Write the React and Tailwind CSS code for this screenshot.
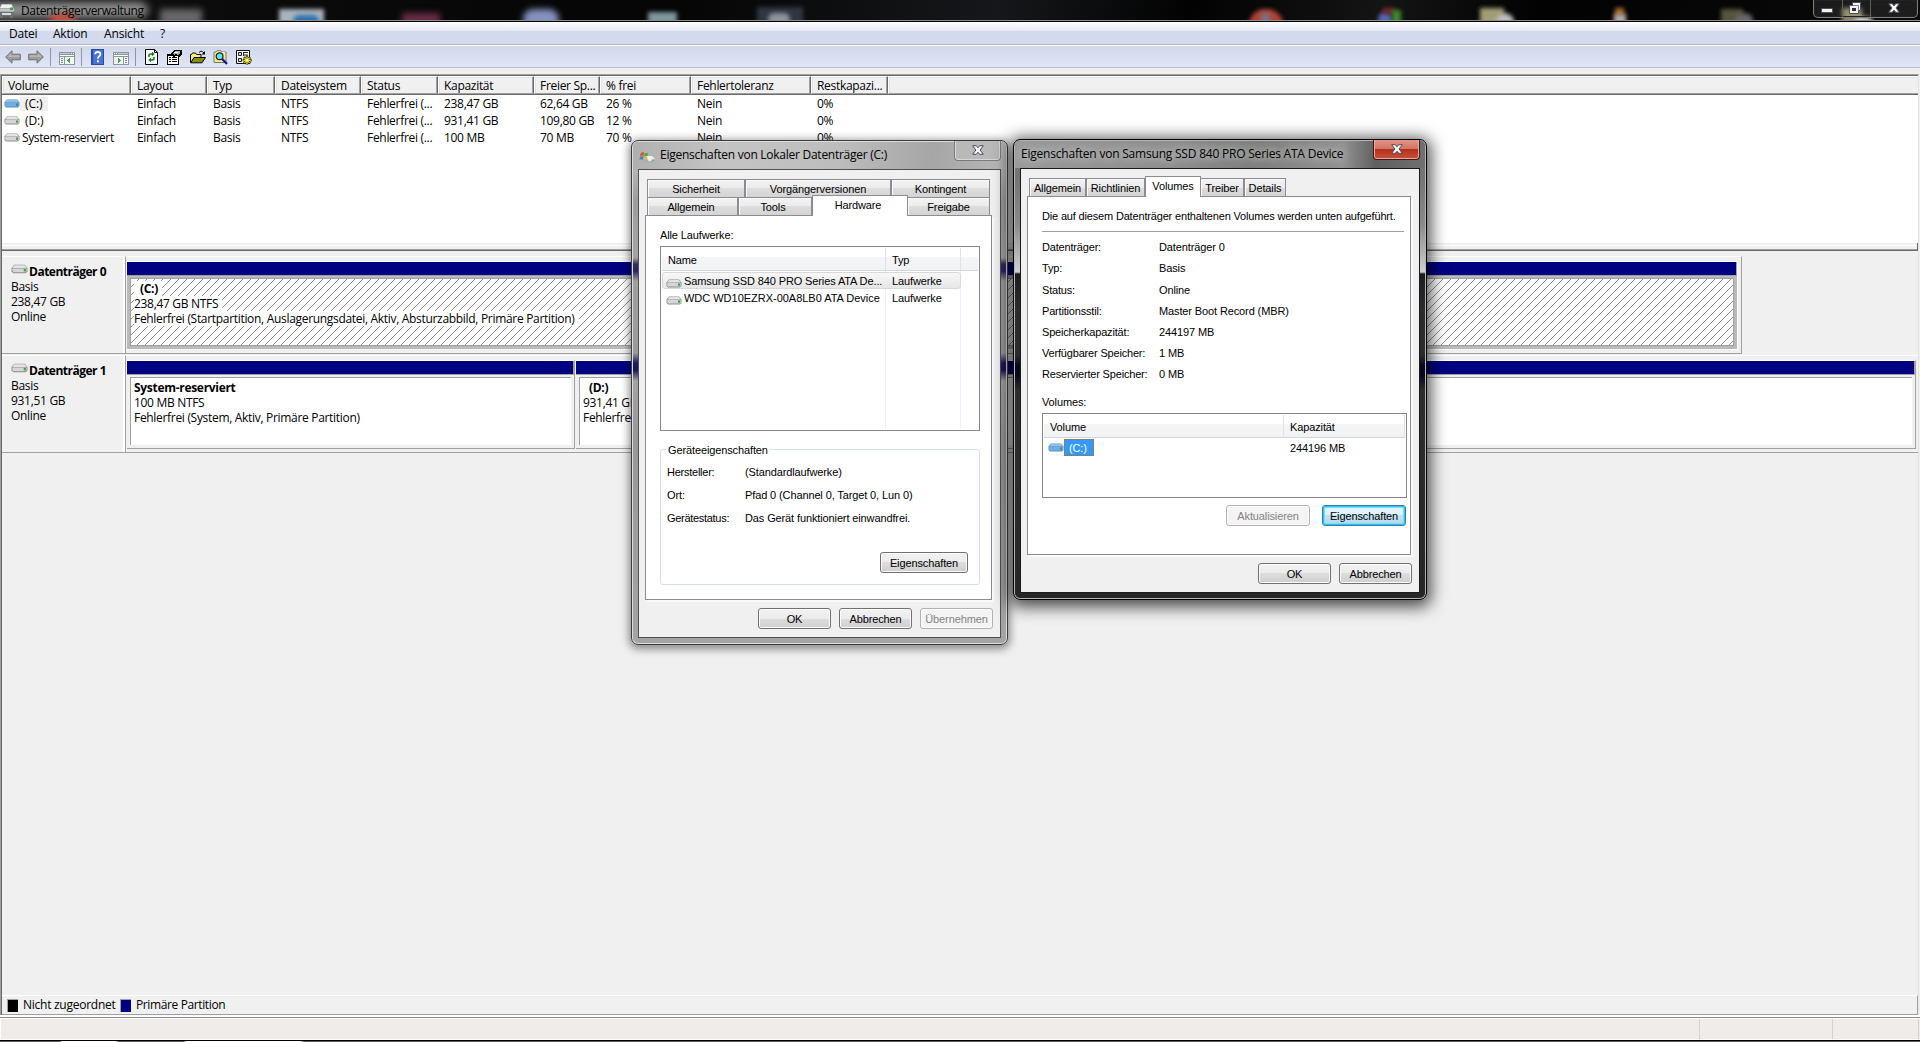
import React from "react";
import clsx from "clsx";

const columns = [
  { label: "Volume", w: "w-[129px]" },
  { label: "Layout", w: "w-[76px]" },
  { label: "Typ", w: "w-[68px]" },
  { label: "Dateisystem", w: "w-[86px]" },
  { label: "Status", w: "w-[77px]" },
  { label: "Kapazität", w: "w-[96px]" },
  { label: "Freier Sp...", w: "w-[66px]" },
  { label: "% frei", w: "w-[91px]" },
  { label: "Fehlertoleranz", w: "w-[120px]" },
  { label: "Restkapazi...", w: "w-[77px]" },
];

const volumes = [
  { name: "(C:)", system: true, cells: ["Einfach", "Basis", "NTFS", "Fehlerfrei (...", "238,47 GB", "62,64 GB", "26 %", "Nein", "0%"] },
  { name: "(D:)", cells: ["Einfach", "Basis", "NTFS", "Fehlerfrei (...", "931,41 GB", "109,80 GB", "12 %", "Nein", "0%"] },
  { name: "System-reserviert", cells: ["Einfach", "Basis", "NTFS", "Fehlerfrei (...", "100 MB", "70 MB", "70 %", "Nein", "0%"] },
];

const diskInfo = [
  ["Datenträger:", "Datenträger 0"],
  ["Typ:", "Basis"],
  ["Status:", "Online"],
  ["Partitionsstil:", "Master Boot Record (MBR)"],
  ["Speicherkapazität:", "244197 MB"],
  ["Verfügbarer Speicher:", "1 MB"],
  ["Reservierter Speicher:", "0 MB"],
];

/* ---------- Icons ---------- */

const DriveIcon = ({ blue, className }) => (
  <svg viewBox="0 0 16 9" className={clsx("shrink-0", className)}>
    <path d="M3 .5h10l2.5 3v3.2L14 8.5H2L.5 6.7V3.5z" fill={blue ? "#4f8fcb" : "#8d8d90"} />
    <path d="M3.2 1h9.6l2 2.6H1.2z" fill={blue ? "#8fc0ea" : "#e3e3e6"} />
    <path d="M1.3 4h13.4v2.4l-1 1.2H2.3l-1-1.2z" fill={blue ? "#74aee0" : "#d5d5da"} />
    <path d="M12 4.4h2v2.4h-2z" fill={blue ? "#2f9a78" : "#3fa535"} />
  </svg>
);

const AppIcon = () => (
  <svg viewBox="0 0 16 16" className="h-4 w-4 shrink-0">
    <path d="M2 1h11l2 4v4H0V5z" fill="#8f9294" />
    <path d="M3 1.5h9.5L14 5H1z" fill="#f1f1f1" />
    <path d="M0 5.5h15v3H0z" fill="#c4c6c9" />
    <path d="M11 4.500h3V7h-3z" fill="#35a33a" />
    <path d="M0 9h15l-1 3v3h-3v-2H4v2H1v-3z" fill="#6b7275" />
    <path d="M3 10h9v2H3z" fill="#d9dcdd" />
  </svg>
);

const ArrowIcon = ({ flip }) => (
  <svg viewBox="0 0 16 14" className={clsx("h-3.5 w-4", flip && "-scale-x-100")}>
    <path d="M.7 7 7 .8v3.400h8.300v5.600H7v3.400z" fill="#9c9c9c" stroke="#6f6f6f" strokeWidth="1" />
    <path d="M2 7 6.200 2.800V5.200h8.200V7z" fill="#b5b5b5" />
  </svg>
);

const PaneIcon = ({ flip }) => (
  <svg viewBox="0 0 16 13" shapeRendering="crispEdges" className={clsx("h-[13px] w-4", flip && "-scale-x-100")}>
    <path d="M0 0h16v13H0z" fill="#8f959c" />
    <path d="M1 1h10v1H1z" fill="#c5cad0" />
    <path d="M12 1h1v1h-1zM14 1h1v1h-1zM1 3h14v1H1z" fill="#fff" />
    <path d="M1 5h4v7H1zM6 5h9v7H6z" fill="#fafafa" />
    <path d="M2 6h2v1H2zM2 8h2v1H2zM2 10h2v1H2z" fill="#6c86ad" />
    <path d="M11 5.600v5.800L8 8.500z" fill="#36b036" />
  </svg>
);

const HelpIcon = () => (
  <svg viewBox="0 0 13 16" className="h-4 w-[13px]">
    <path d="M0 0h13v16H0z" fill="#2a4ca8" />
    <path d="M2 1h10v14H2z" fill="#4a74d4" />
    <path d="M4.200 5.200c0-3.200 5.200-3.200 5.200 0 0 2-2.500 2-2.500 4.600" fill="none" stroke="#fff" strokeWidth="1.7" />
    <path d="M6 11.300h1.900v1.900H6z" fill="#fff" />
  </svg>
);

const RefreshIcon = () => (
  <svg viewBox="0 0 13 16" className="h-4 w-[13px]">
    <path d="M.5.5h9l3 3v12H.5z" fill="#fff" stroke="#000" />
    <path d="M9.500.5v3h3" fill="none" stroke="#000" />
    <path d="M4 8V6.500Q4 5 6 5h1.500M9 8v1.500Q9 11 7 11H5.500" fill="none" stroke="#0a7d1c" strokeWidth="1.5" />
    <path d="M7 2.700 9.700 5 7 7.300zM6 8.700 3.300 11 6 13.300z" fill="#0a7d1c" />
  </svg>
);

const PropertiesIcon = () => (
  <svg viewBox="0 0 16 15" shapeRendering="crispEdges" className="h-[15px] w-4">
    <path d="M0 4h12v11H0z" fill="#000" />
    <path d="M1 6h10v8H1z" fill="#fff" />
    <path d="M2 7h2v1H2zM5 7h5v1H5zM2 9h2v1H2zM5 9h5v1H5zM2 11h2v1H2zM5 11h5v1H5z" fill="#000" />
    <path d="M4 3 7 0h8v4l-3 3-3-1-3 1-1-2z" fill="#000" />
    <path d="M5 3h2l1-2h5v3l-2 1-2-1-2 1z" fill="#a9a9a9" />
    <path d="M7 2h4v1H7z" fill="#fff" />
  </svg>
);

const OpenIcon = () => (
  <svg viewBox="0 0 16 14" className="h-3.5 w-4">
    <path d="M.5 12.500v-8h1l1-1.500h3l1 1.500H11v3" fill="#f4ee7a" stroke="#000" />
    <path d="M.7 12.800 4 7.500h11.500L12 12.800z" fill="#8a8a12" stroke="#000" />
    <path d="M9 2.600Q11.300-.3 14 3" fill="none" stroke="#000" />
    <path d="M15 1v3.500h-3.500z" fill="#000" />
  </svg>
);

const SearchIcon = () => (
  <svg viewBox="0 0 16 15" className="h-[15px] w-4">
    <path d="M1 12.500V2h2l1-1.300h4L9 2h4v10.500z" fill="#f5ee86" stroke="#77776a" />
    <path d="M3 2.700h9" stroke="#fff" />
    <circle cx="6.600" cy="6.200" r="3.400" fill="#63e1ee" stroke="#222" strokeWidth="1.2" />
    <path d="M9.200 9 14 14" stroke="#10139b" strokeWidth="2.2" />
  </svg>
);

const SettingsIcon = () => (
  <svg viewBox="0 0 16 15" className="h-[15px] w-4">
    <path d="M.5.5h13v13H.5z" fill="#fff" stroke="#111" />
    <path d="M2.500 2.500h3v3h-3zM2.500 8.500h3v3h-3z" fill="#ddd" stroke="#222" />
    <path d="M8 2.500h4M8 5h4M7.500 2v4" stroke="#222" />
    <path d="M11 5.500v9M6.600 10.300h9M7.800 7.100l6.400 6.400M14.200 7.100l-6.400 6.400" stroke="#2c2c08" strokeWidth="2.4" />
    <path d="M11 6.600v7.500M7.300 10.300h7.500M8.400 7.700l5.200 5.200M13.600 7.700l-5.200 5.200" stroke="#eadd22" strokeWidth="1.3" />
    <circle cx="11" cy="10.300" r="1" fill="#fff" />
  </svg>
);

const CloseGlyph = ({ className }) => (
  <svg viewBox="0 0 12 10" className={className}>
    <path d="M.7.7h3.600L6 2.800 7.700.7h3.600L8.100 5l3.200 4.300H7.700L6 7.200 4.300 9.300H.7L3.900 5z" fill="#f6f6f6" stroke="#4d4f5e" strokeWidth="1" />
  </svg>
);

const TitleDriveIcon = () => (
  <svg viewBox="0 0 17 14" className="h-3.5 w-[17px]">
    <path d="M4 6h9l3 3v2l-6 2.500L3 10z" fill="#a9adb0" />
    <path d="M6 6h7l3 3-6 2.500z" fill="#eceeef" />
    <path d="M1.500 3.500Q3 1.500 5 2.500l-.5 3.200Q2.500 5 1 6.700z" fill="#d0562a" />
    <path d="M5.600 2.800Q7.500 3.500 9 2.800L8.600 6q-1.700.8-3.500-.1z" fill="#5fa53a" />
    <path d="M.9 7.200q1.700-1.500 3.500-.5L4 9.800q-1.800-1-3.500.2z" fill="#3d86c6" />
    <path d="M5 6.800q1.800.9 3.500.2L8 10q-1.700.7-3.400-.1z" fill="#e3b740" />
    <path d="M13 9.500h1.500v1H13z" fill="#35a33a" />
  </svg>
);

/* ---------- Main window ---------- */

// desktop icons shimmering through the glass title bar
const Glass = () => (
  <div className="absolute inset-0 overflow-hidden bg-[linear-gradient(100deg,#151515,#0b0b0b_12%,#050505_35%,#15171a_52%,#020202_62%,#141414_72%,#020202_80%,#0a0a0a)]">
    <div className="absolute left-[-10px] top-[2px] h-4 w-[158px] rounded-full bg-[#8f8f8f] blur-[4px]" />
    <div className="absolute left-[50px] top-[14px] h-3 w-[26px] rounded-full bg-[#c8503f] blur-[3px]" />
    <div className="absolute left-[160px] top-[9px] h-4 w-[42px] bg-[#66666a] blur-[3px]" />
    <div className="absolute left-[279px] top-[9px] h-4 w-[45px] bg-[#a9b4bd] blur-[2px]" />
    <div className="absolute left-[293px] top-[15px] h-3 w-[26px] rounded-full bg-[#2f70b0] blur-[2px]" />
    <div className="absolute left-[402px] top-[13px] h-3 w-[38px] bg-[#6b2c45] blur-[3px]" />
    <div className="absolute left-[523px] top-[9px] h-5 w-[36px] rounded-full bg-[#8492c0] blur-[3px]" />
    <div className="absolute left-[648px] top-[12px] h-3 w-[29px] bg-[#7d979b] blur-[2px]" />
    <div className="absolute left-[757px] top-[7px] h-4 w-[46px] bg-[#2f3743] blur-[2px]" />
    <div className="absolute left-[768px] top-[13px] h-3 w-[22px] rounded-full bg-[#8f939d] blur-[2px]" />
    <div className="absolute left-[1249px] top-[9px] h-8 w-[34px] rounded-full bg-[#b04434] blur-[2px]" />
    <div className="absolute left-[1261px] top-[13px] h-3 w-[9px] bg-[#7a7082] blur-[2px]" />
    <div className="absolute left-[1378px] top-[12px] h-4 w-[14px] rounded-full bg-[#5566b5] blur-[2px]" />
    <div className="absolute left-[1383px] top-[8px] h-1.5 w-[12px] bg-[#7c2730] blur-[2px]" />
    <div className="absolute left-[1392px] top-[10px] h-4 w-[9px] bg-[#3d8a2e] blur-[2px]" />
    <div className="absolute left-[1480px] top-[8px] h-5 w-[24px] bg-[#a29d74] blur-[2px]" />
    <div className="absolute left-[1496px] top-[13px] h-5 w-[18px] rounded-full bg-[#bdbdc0] blur-[2px]" />
    <div className="absolute left-[1615px] top-[8px] h-2 w-[9px] bg-[#b06a28] blur-[2px]" />
    <div className="absolute left-[1614px] top-[14px] h-3 w-[12px] bg-[#b5aaa8] blur-[2px]" />
    <div className="absolute left-[1721px] top-[9px] h-4 w-[22px] bg-[#57543d] blur-[2px]" />
    <div className="absolute left-[1735px] top-[13px] h-4 w-[18px] rounded-full bg-[#66666a] blur-[2px]" />
    <div className="absolute left-[1842px] top-[8px] h-5 w-[20px] bg-[#8c8762] blur-[2px]" />
    <div className="absolute left-[1855px] top-[17px] h-3 w-[18px] rounded-full bg-[#d8d8d8] blur-[2px]" />
  </div>
);

const TitleBar = () => (
  <div className="relative flex h-[22px] shrink-0 border-b border-black">
    <Glass />
    <div className="relative flex h-[21px] w-full items-start border-b border-[#8e8e8e]">
      <div className="-ml-px mt-[3px]"><AppIcon /></div>
      <span className="ml-[6px] mt-px leading-5 tracking-[-0.34px] text-black">Datenträgerverwaltung</span>
      <div className="ml-auto mr-0.5 flex h-[18px] w-[105px] rounded-b-[5px] border border-t-0 border-[#7c7c7c] bg-[#ffffff14] shadow-[inset_0_0_0_1px_#222]">
        <div className="flex w-[29px] items-center justify-center border-r border-[#5f5f5f] pr-[2px] pt-1">
          <div className="h-[5px] w-[12px] rounded-[1px] border border-[#4d4f5e] bg-[#f2f2f2]" />
        </div>
        <div className="flex w-[28px] justify-center border-r border-[#5f5f5f] pr-[3px] pt-[2px]">
          <svg viewBox="0 0 12 12" className="h-3 w-3">
            <path d="M3.500.5h8v8h-2v3h-9v-8h3z" fill="#f2f2f2" stroke="#4d4f5e" />
            <path d="M3 6h4v3H3z" fill="#2f3140" />
            <path d="M3.500 3.500h6v5" fill="none" stroke="#4d4f5e" strokeWidth=".7" />
          </svg>
        </div>
        <div className="flex flex-1 justify-center pt-[3px]"><CloseGlyph className="h-2.5 w-3" /></div>
      </div>
    </div>
  </div>
);

const MenuBar = () => (
  <div className="flex h-[23px] shrink-0 border-b border-[#b3b4ae] bg-[linear-gradient(#ffffff,#e4e9f4_9px,#d4daed_9px,#d5dbee)] pl-[9px] pt-px leading-[22px]">
    <span className="w-[44px] tracking-[-0.2px]">Datei</span>
    <span className="w-[51px] tracking-[-0.25px]">Aktion</span>
    <span className="w-[56px] tracking-[-0.15px]">Ansicht</span>
    <span>?</span>
  </div>
);

const ToolSep = ({ className }) => <div className={clsx("h-[18px] w-px bg-[#8e95a3]", className)} />;

const Toolbar = () => (
  <div className="flex h-[23px] shrink-0 items-center border-b border-t border-b-[#b4bfd3] border-t-white bg-linear-to-b from-[#d2d8ec] to-[#e0e6f7] pl-[5px] pt-px">
    <ArrowIcon />
    <div className="ml-[7px]"><ArrowIcon flip /></div>
    <ToolSep className="ml-[6px]" />
    <div className="ml-2 pt-0.5"><PaneIcon /></div>
    <ToolSep className="ml-[6px]" />
    <div className="ml-[9px]"><HelpIcon /></div>
    <div className="ml-[9px] pt-0.5"><PaneIcon flip /></div>
    <ToolSep className="ml-[6px]" />
    <div className="ml-[9px]"><RefreshIcon /></div>
    <div className="ml-[9px]"><PropertiesIcon /></div>
    <div className="ml-[7px]"><OpenIcon /></div>
    <div className="ml-[7px]"><SearchIcon /></div>
    <div className="ml-[7px]"><SettingsIcon /></div>
  </div>
);

const VolumeList = () => (
  <div className="h-[167px] shrink-0 bg-white">
    <div className="flex h-[19px] border-b border-[#696969] bg-[#f0f0f0]">
      {columns.map((col) => (
        <div
          key={col.label}
          className={clsx("h-[18px] shrink-0 whitespace-nowrap border-b border-l border-r border-t border-b-[#a0a0a0] border-l-white border-r-[#696969] border-t-white pl-[5px] leading-[17px] shadow-[inset_-1px_0_0_#a0a0a0,inset_1px_1px_0_#e3e3e3]", col.w)}
        >
          {col.label}
        </div>
      ))}
      <div className="h-[18px] flex-1 border-b border-l border-t border-b-[#a0a0a0] border-l-white border-t-white shadow-[inset_1px_1px_0_#e3e3e3]" />
    </div>
    <div>
      {volumes.map((v) => (
        <div key={v.name} className="flex h-[17px] whitespace-nowrap leading-[17px]">
          <div className="flex w-[129px] items-center pl-[2px]">
            <DriveIcon blue={v.system} className="h-[9px] w-4" />
            {v.name.startsWith("(") ? (
              <span className={clsx("flex h-[14px] items-center pl-[5px] pr-[6px] tracking-[-0.1px]", v.system && "bg-[#f0f0f0]")}>{v.name}</span>
            ) : (
              <span className="ml-[2px] tracking-[-0.38px]">{v.name}</span>
            )}
          </div>
          {v.cells.map((cell, i) => (
            <div key={i} className={clsx("shrink-0 pl-1.5", columns[i + 1].w)}>{cell}</div>
          ))}
        </div>
      ))}
    </div>
  </div>
);

const DiskLabel = ({ name, size }) => (
  <div className="h-[98px] w-[124px] shrink-0 border-b border-r border-t border-b-[#a0a0a0] border-r-[#a0a0a0] border-t-white pl-[9px] pt-[7px] leading-[15px] shadow-[inset_-2px_0_0_#fff]">
    <div className="flex">
      <DriveIcon className="h-[10px] w-[17px]" />
      <b className="ml-px tracking-[-0.5px]">{name}</b>
    </div>
    <div>Basis</div>
    <div>{size}</div>
    <div>Online</div>
  </div>
);

const Hatch = () => (
  <svg className="absolute inset-0 h-full w-full" shapeRendering="crispEdges">
    <defs>
      <pattern id="hatch" width="8" height="8" patternUnits="userSpaceOnUse">
        <path d="M7 0h1v1H7zM6 1h1v1H6zM5 2h1v1H5zM4 3h1v1H4zM3 4h1v1H3zM2 5h1v1H2zM1 6h1v1H1zM0 7h1v1H0z" fill="#909090" />
      </pattern>
    </defs>
    <rect width="100%" height="100%" fill="url(#hatch)" />
  </svg>
);

const Partition = ({ title, indent, lines, selected, className }) => (
  <div className={clsx("flex h-[89px] shrink-0 flex-col border-b border-r border-t border-t-white", selected ? "border-b-white border-r-white bg-[#bababa]" : "border-b-[#a0a0a0] border-r-[#a0a0a0]", className)}>
    <div className="h-[14px] shrink-0 border-b border-r border-[#a0a0a0] bg-[#000080]" />
    <div className={clsx("relative ml-[3px] mr-[3px] mt-0.5 h-[68px] overflow-hidden whitespace-nowrap border-l border-t border-[#a0a0a0] bg-white pl-[3px] pt-[2px] leading-[15px]", selected && "border-b border-r")}>
      {selected && <Hatch />}
      <div className="relative flex"><b className={clsx("bg-white pr-1 tracking-[-0.3px]", indent && "pl-[6px]")}>{title}</b></div>
      {lines.map((line) => (
        <div key={line} className="relative flex"><span className="bg-white pr-1 tracking-[-0.31px]">{line}</span></div>
      ))}
    </div>
  </div>
);

const DiskView = () => (
  <div className="flex flex-1 flex-col">
    <div className="mt-[5px] flex h-[99px]">
      <DiskLabel name="Datenträger 0" size="238,47 GB" />
      <div className="flex h-[98px] w-[1616px] border-b border-r border-t border-b-[#a0a0a0] border-r-[#a0a0a0] border-t-white pl-px pt-1">
        <Partition
          selected
          indent
          className="w-[1611px]"
          title="(C:)"
          lines={["238,47 GB NTFS", "Fehlerfrei (Startpartition, Auslagerungsdatei, Aktiv, Absturzabbild, Primäre Partition)"]}
        />
      </div>
    </div>
    <div className="flex h-[99px]">
      <DiskLabel name="Datenträger 1" size="931,51 GB" />
      <div className="flex h-[98px] flex-1 border-b border-t border-b-[#a0a0a0] border-t-white pl-px pt-1">
        <Partition className="w-[448px]" title="System-reserviert" lines={["100 MB NTFS", "Fehlerfrei (System, Aktiv, Primäre Partition)"]} />
        <Partition indent className="ml-px w-[1340px]" title="(D:)" lines={["931,41 GB NTFS", "Fehlerfrei (Primäre Partition)"]} />
      </div>
    </div>
    <div className="mt-auto flex h-5 items-center border-b border-r border-t border-b-[#a0a0a0] border-r-[#a0a0a0] border-t-white pl-[5px]">
      <div className="h-[13px] w-[11px] border-l border-t border-[#a0a0a0] bg-black" />
      <span className="ml-[5px] w-[97px] tracking-[-0.26px]">Nicht zugeordnet</span>
      <div className="h-[13px] w-[11px] border-l border-t border-[#a0a0a0] bg-[#000080]" />
      <span className="ml-[5px] tracking-[-0.38px]">Primäre Partition</span>
    </div>
  </div>
);

const StatusBar = () => (
  <div className="flex h-[27px] shrink-0 flex-col">
    <div className="h-[2px] bg-white" />
    <div className="h-px bg-[#8c8c8c]" />
    <div className="flex h-[22px] border-y border-l border-white bg-[#f0ecea]">
      <div className="w-[1699px] border-r border-[#d2d2d2]" />
      <div className="w-[133px] border-r border-[#d2d2d2]" />
      <div className="w-[86px] border-r border-[#d2d2d2]" />
    </div>
    <div className="h-px bg-black" />
    <div className="h-px bg-[linear-gradient(90deg,#5b5b5b_60px,#fff_62px_116px,#5b5b5b_118px_184px,#fff_186px_300px,#5d5d5d_304px)]" />
  </div>
);

/* ---------- Dialog parts ---------- */

const Button = ({ children, disabled, focused, className }) => (
  <button
    className={clsx(
      "flex h-[21px] shrink-0 items-center justify-center rounded-[3px] border pt-px",
      disabled && "border-[#adb2b5] bg-[#f4f4f4] text-[#838383] shadow-[inset_0_0_0_1px_#fcfcfc]",
      focused && "border-[#3c7fb1] bg-[linear-gradient(#eaf6fd,#dcf0fb_50%,#c2e2f4_50%,#b9d9ea)] shadow-[inset_0_0_0_1px_#1fc4f5,inset_0_0_1px_2px_#7ddcfa]",
      !disabled && !focused && "border-[#707070] bg-[linear-gradient(#f2f2f2,#ebebeb_50%,#dddddd_50%,#cfcfcf)] shadow-[inset_0_0_0_1px_#fcfcfc]",
      className
    )}
  >
    {children}
  </button>
);

const Tab = ({ children, active, className }) => (
  <div
    className={clsx(
      "flex shrink-0 justify-center border-[#898c95]",
      active
        ? "relative z-10 -mb-px h-[21px] border-l border-r border-t bg-white pt-[2px] leading-[14px]"
        : "h-[18px] border-l border-r border-t bg-[linear-gradient(#f3f3f3,#ebebeb_50%,#dddddd_50%,#d4d4d4)] leading-[18px] shadow-[inset_1px_1px_0_#fbfbfb]",
      className
    )}
  >
    {children}
  </div>
);

const ListHeader = ({ children }) => (
  <div className="mx-px flex h-[24px] border-b border-[#d5d5d5] bg-[linear-gradient(#ffffff_10px,#f4f6f8_10px,#f1f2f4)] pt-px leading-[24px]">{children}</div>
);

/* "Eigenschaften von Lokaler Datenträger (C:)" */
const VolumeDialog = () => (
  <div className="absolute left-[631px] top-[140px] flex h-[505px] w-[377px] flex-col rounded-[7px] border border-[#3c3c3c] bg-[linear-gradient(#a9a9a9,#b4b4b4_30px,#9d9d9d_60px,#a4a4a4_112px,#a1a1a1_117px,#30305e_123px,#25256a_130px,#a0a0a0_140px,#9a9a9a_212px,#1c1c5e_222px,#16165c_229px,#a3a3a3_240px,#989898_300px,#a4a4a4)] px-1.5 pb-1.5 text-[11px] shadow-[inset_0_0_0_1px_#dcdcdc,0_2px_9px_2px_#00000070]">
    <div className="-mx-[5px] mt-px flex h-[27px] shrink-0 rounded-t-[5px] bg-[linear-gradient(95deg,#b0b0b0,#c4c4c4_25%,#bdbdbd_55%,#a6a6a6_80%,#b8b8b8)] pl-1.5">
      <div className="mt-2"><TitleDriveIcon /></div>
      <span className="ml-1 font-['Open_Sans',sans-serif] text-xs leading-[25px] tracking-[-0.26px]">Eigenschaften von Lokaler Datenträger (C:)</span>
      <div className="-mt-px ml-auto mr-[5px] flex h-[20px] w-[47px] justify-center rounded-b-[4px] border border-t-0 border-[#7c7c7c] bg-[#b9b9b9] pl-px pt-1 shadow-[inset_0_-1px_0_#d8d8d8,inset_1px_0_0_#d8d8d8,inset_-1px_0_0_#d8d8d8]">
        <CloseGlyph className="h-2.5 w-3" />
      </div>
    </div>
    <div className="flex-1 border border-[#505050] bg-[#f0f0f0] pt-[9px]">
      <div className="flex pl-2">
        <Tab className="w-[98px]">Sicherheit</Tab>
        <Tab className="w-[146px]">Vorgängerversionen</Tab>
        <Tab className="w-[99px]">Kontingent</Tab>
      </div>
      <div className="-mt-0.5 flex items-end pl-2">
        <Tab className="w-[91px] pr-[3px]">Allgemein</Tab>
        <Tab className="w-[74px] pr-1">Tools</Tab>
        <Tab active className="w-[96px] pr-1">Hardware</Tab>
        <Tab className="w-[82px] border-l-0">Freigabe</Tab>
      </div>
      <div className="ml-1.5 h-[385px] w-[347px] border border-[#898c95] bg-white pl-[14px] pt-3 shadow-[2px_2px_0_#fafafa]">
        <div className="h-[14px] leading-[14px]">Alle Laufwerke:</div>
        <div className="mt-1 h-[185px] w-[320px] border border-[#828790]">
          <ListHeader>
            <div className="w-[224px] border-r border-[#dfe3e8] pl-[6px]">Name</div>
            <div className="w-[75px] border-r border-[#dfe3e8] pl-[6px]">Typ</div>
          </ListHeader>
          <div className="relative h-[158px] pt-px">
            <div className="absolute bottom-0 left-[224px] top-0 w-px bg-[#e9f1fa]" />
            <div className="absolute bottom-0 left-[299px] top-0 w-px bg-[#e9f1fa]" />
            <div className="relative ml-px flex h-[17px] w-[299px] whitespace-nowrap rounded-[3px] border border-[#d9d9d9] bg-linear-to-b from-[#f8f8f8] to-[#e6e6e6] leading-[16px]">
              <DriveIcon className="ml-[3px] mt-[6px] h-[9px] w-4" />
              <span className="ml-[2px] w-[208px]">Samsung SSD 840 PRO Series ATA De...</span>
              <span>Laufwerke</span>
            </div>
            <div className="relative ml-px flex h-[17px] w-[299px] whitespace-nowrap border border-transparent leading-[16px]">
              <DriveIcon className="ml-[3px] mt-[6px] h-[9px] w-4" />
              <span className="ml-[2px] w-[208px] tracking-[-0.02px]">WDC WD10EZRX-00A8LB0 ATA Device</span>
              <span>Laufwerke</span>
            </div>
          </div>
        </div>
        <div className="relative mt-[18px] h-[136px] w-[320px] rounded-[3px] border border-[#d5dfe5] pl-1.5 pr-[11px] pt-[15px]">
          <span className="absolute -top-[7px] left-[5px] bg-white px-[2px] leading-[14px]">Geräteeigenschaften</span>
          <div className="flex flex-col gap-[9px] leading-[14px]">
            <div className="flex"><span className="w-[78px] tracking-[-0.25px]">Hersteller:</span>(Standardlaufwerke)</div>
            <div className="flex"><span className="w-[78px]">Ort:</span>Pfad 0 (Channel 0, Target 0, Lun 0)</div>
            <div className="flex"><span className="w-[78px] tracking-[-0.3px]">Gerätestatus:</span>Das Gerät funktioniert einwandfrei.</div>
          </div>
          <Button className="ml-auto mt-[27px] w-[88px]">Eigenschaften</Button>
        </div>
      </div>
      <div className="mt-2 flex justify-end gap-2 pr-[7px]">
        <Button className="w-[73px]">OK</Button>
        <Button className="w-[73px]">Abbrechen</Button>
        <Button disabled className="w-[73px]">Übernehmen</Button>
      </div>
    </div>
  </div>
);

/* "Eigenschaften von Samsung SSD 840 PRO Series ATA Device" */
const DeviceDialog = () => (
  <div className="absolute left-[1013px] top-[139px] flex h-[461px] w-[414px] flex-col rounded-[7px] border border-black bg-[linear-gradient(#6f6f6f,#757575_40px,#8b8b8b_85px,#cfcfcf_132px,#1d1d1f_134px,#2b2d2d_170px,#2a2c2c_215px,#07071c_226px,#0a0a1c_236px,#2e2e2e_250px,#262626)] px-1.5 pb-1.5 text-[11px] shadow-[inset_0_0_0_1px_#b5b5b5,0_3px_16px_4px_#000000b0]">
    <div className="-mx-[5px] mt-px flex h-[27px] shrink-0 rounded-t-[5px] bg-[linear-gradient(92deg,#9a9a9a,#8d8d8d_40%,#7c7f7c_58%,#929292_80%,#5f5f5f_88%,#707070)] pl-1.5">
      <span className="font-['Open_Sans',sans-serif] text-xs leading-[26px] tracking-[-0.21px] [text-shadow:0_0_8px_#d0d0d0,0_0_8px_#c0c0c0]">Eigenschaften von Samsung SSD 840 PRO Series ATA Device</span>
      <div className="-mt-px ml-auto mr-[5px] flex h-[20px] w-[47px] justify-center rounded-b-[4px] border border-t-0 border-[#4a1410] bg-[linear-gradient(#e0968a,#d47565_45%,#b5301b_48%,#c4523c)] pl-px pt-1 shadow-[inset_0_-1px_0_#e6aca2,inset_1px_0_0_#e6aca2,inset_-1px_0_0_#e6aca2]">
        <CloseGlyph className="h-2.5 w-3" />
      </div>
    </div>
    <div className="flex-1 border border-[#1a1a1a] bg-[#f0f0f0] pt-[7px]">
      <div className="flex items-end pl-2">
        <Tab className="w-[57px]">Allgemein</Tab>
        <Tab className="w-[59px]">Richtlinien</Tab>
        <Tab active className="w-[56px]">Volumes</Tab>
        <Tab className="w-[43px] border-l-0">Treiber</Tab>
        <Tab className="w-[42px]">Details</Tab>
      </div>
      <div className="ml-1.5 h-[359px] w-[384px] border border-[#898c95] bg-white pl-[14px] pr-1 pt-3 shadow-[2px_2px_0_#fafafa]">
        <div className="h-[14px] whitespace-nowrap leading-[14px] tracking-[-0.17px]">Die auf diesem Datenträger enthaltenen Volumes werden unten aufgeführt.</div>
        <div className="mt-2 h-px w-[362px] bg-[#a0a0a0]" />
        <div className="pt-[5px] leading-[21px]">
          {diskInfo.map(([label, value], i) => (
            <div key={label} className={clsx("flex h-[21px]", i === 2 && "mt-px")}>
              <span className="w-[117px] tracking-[-0.18px]">{label}</span>
              <span>{value}</span>
            </div>
          ))}
        </div>
        <div className="mt-[10px] h-[14px] leading-[14px]">Volumes:</div>
        <div className="mt-1 h-[85px] w-[365px] border border-[#828790]">
          <ListHeader>
            <div className="w-[240px] border-r border-[#dfe3e8] pl-[6px]">Volume</div>
            <div className="w-[121px] border-r border-[#dfe3e8] pl-[6px]">Kapazität</div>
          </ListHeader>
          <div className="flex h-[18px] pl-[5px] pt-px leading-[18px]">
            <DriveIcon blue className="mt-1 h-[9px] w-4" />
            <span className="h-[17px] w-[30px] border border-dotted border-[#cc6600] bg-[#3399ff] pl-1 leading-[16px] text-white">(C:)</span>
            <span className="ml-[196px]">244196 MB</span>
          </div>
        </div>
        <div className="mt-[7px] flex justify-end gap-3">
          <Button disabled className="w-[84px]">Aktualisieren</Button>
          <Button focused className="w-[84px]">Eigenschaften</Button>
        </div>
      </div>
      <div className="mt-2 flex justify-end gap-2 pr-[7px]">
        <Button className="w-[73px]">OK</Button>
        <Button className="w-[73px]">Abbrechen</Button>
      </div>
    </div>
  </div>
);

const App = () => {
  return (
    <div className="relative flex h-[1042px] w-[1920px] flex-col overflow-hidden bg-[#f0f0f0] font-['Open_Sans',sans-serif] text-xs tracking-[-0.3px] text-black">
      <TitleBar />
      <MenuBar />
      <Toolbar />
      <div className="mr-px mt-1.5 flex flex-1 flex-col border-l border-r border-t border-l-[#a0a0a0] border-r-[#e3e3e3] border-t-[#a0a0a0]">
        <div className="flex flex-1 flex-col border-l border-t border-[#696969]">
          <VolumeList />
          <div className="h-[8px] shrink-0 border-b border-r border-[#696969] pt-[2px]">
            <div className="h-[5px] border-b border-t border-b-[#a0a0a0] border-t-white" />
          </div>
          <DiskView />
        </div>
      </div>
      <StatusBar />
      <div className="font-['Liberation_Sans',sans-serif] tracking-[-0.12px]">
        <VolumeDialog />
        <DeviceDialog />
      </div>
    </div>
  );
};

export default App;
